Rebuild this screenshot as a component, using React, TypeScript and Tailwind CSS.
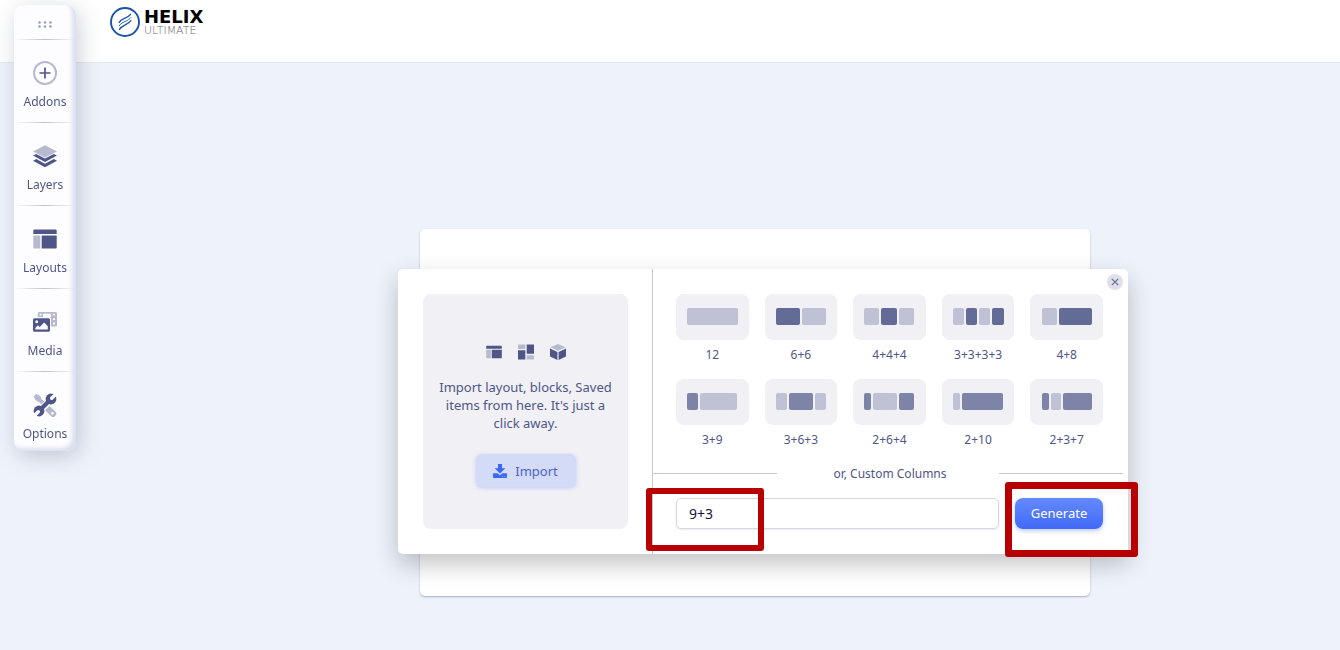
import { useState } from "react";
import type { ReactNode } from "react";

const DARK = "#4f5687";
const LIGHT = "#b7bacf";

function AddonsIcon() {
  return (
    <svg viewBox="0 0 24 24" className="size-6" fill="none" aria-hidden="true">
      <circle cx="12" cy="12" r="11" stroke={LIGHT} strokeWidth="2" />
      <path d="M12 6.5v11M6.5 12h11" stroke={DARK} strokeWidth="1.700" />
    </svg>
  );
}

function LayersIcon() {
  return (
    <svg viewBox="0 0 24 24" className="size-6" aria-hidden="true">
      <path d="M12 1.200 24 7.400 12 13.600 0 7.400z" fill={LIGHT} />
      <path d="M0 11.600 3.200 9.900 12 14.500l8.800-4.600 3.200 1.700L12 18z" fill={DARK} />
      <path d="M0 16.800 3.200 15.100 12 19.700l8.800-4.600 3.200 1.700L12 23.200z" fill={DARK} />
    </svg>
  );
}

function LayoutsIcon({ className }: { className: string }) {
  return (
    <svg viewBox="0 0 24 24" className={className} aria-hidden="true">
      <path d="M1.500 2.500h21a1.200 1.200 0 0 1 1.200 1.200V7H.3V3.700a1.200 1.200 0 0 1 1.200-1.200z" fill={DARK} />
      <path d="M.3 8.500h7v13H1.500a1.200 1.200 0 0 1-1.200-1.200z" fill={LIGHT} />
      <path d="M8.700 8.500h15v11.800a1.200 1.200 0 0 1-1.200 1.200H8.700z" fill={DARK} />
    </svg>
  );
}

function MediaIcon() {
  return (
    <svg viewBox="0 0 24 24" className="size-6" aria-hidden="true">
      <path
        fillRule="evenodd"
        fill={LIGHT}
        d="M6.200 2h16.300A1.500 1.500 0 0 1 24 3.500v11.600a1.500 1.500 0 0 1-1.500 1.500H18V8.500A1.500 1.500 0 0 0 16.500 7H4.700V3.500A1.500 1.500 0 0 1 6.200 2zM6.600 3.700v1.800h1.800V3.700zM10 3.700V7h8V3.700zM20 3.700v1.800h2V3.700zM20 8.200V10h2V8.200zM20 12.600v1.800h2v-1.800z"
      />
      <path
        fillRule="evenodd"
        fill={DARK}
        d="M1.500 8.200h14A1.500 1.500 0 0 1 17 9.700v10.600a1.500 1.500 0 0 1-1.500 1.500h-14A1.500 1.500 0 0 1 0 20.300V9.700a1.500 1.500 0 0 1 1.500-1.500zM3.700 10.300a1.500 1.500 0 1 0 0 3 1.500 1.500 0 0 0 0-3zM2.300 19.500h12.500v-3.300l-3.600-3.600-4.500 4.400-1.800-1.700-2.600 2.600z"
      />
    </svg>
  );
}

function OptionsIcon() {
  return (
    <svg viewBox="0 0 24 24" className="size-6" aria-hidden="true">
      <path d="M3 1.400 6.600 3 8.400 6.400l4.200 4.200-2.200 2.200L6.200 8.600 3 7 1.300 3.600z" fill={LIGHT} stroke={LIGHT} strokeLinejoin="round" />
      <path
        fillRule="evenodd"
        fill={LIGHT}
        d="m16.500 13 5.800 5.600a3.100 3.100 0 0 1-4.400 4.400L12 17.200zM19.400 18.900a1.400 1.400 0 1 0 0 2.800 1.400 1.400 0 0 0 0-2.800z"
      />
      <path d="M6.500 17.500 17.500 6.500" stroke="#fdfdff" strokeWidth="6" />
      <path d="M6 18 18 6" stroke={DARK} strokeWidth="4.200" />
      <circle cx="18" cy="6" r="5.400" fill={DARK} />
      <circle cx="6" cy="18" r="5.400" fill={DARK} />
      <path d="M18.700 5.300 24 0M5.300 18.700 0 24" stroke="#fdfdff" strokeWidth="3.400" strokeLinecap="round" />
    </svg>
  );
}

function BlocksIcon() {
  return (
    <svg viewBox="0 0 16 16" className="size-4" aria-hidden="true">
      <path d="M0 .500h7.300V5H0zM8.700 11.200H16v4.300H8.700z" fill={LIGHT} />
      <path d="M0 6.300h7.300v9.200H0zM8.700.500H16v9.200H8.700z" fill={DARK} />
    </svg>
  );
}

function CubeIcon() {
  return (
    <svg viewBox="0 0 16 16" className="size-4" aria-hidden="true">
      <path d="M8 0l7.500 3.300L8 6.800.500 3.300z" fill={LIGHT} />
      <path d="M0 4.600l7.400 3.300v8L.600 12.800A1 1 0 0 1 0 12zM16 4.600 8.600 7.900v8l6.800-3.100A1 1 0 0 0 16 12z" fill={DARK} />
    </svg>
  );
}

function DownloadIcon() {
  return (
    <svg viewBox="0 0 14 14" className="size-[14px]" fill="#3a68f5" aria-hidden="true">
      <path d="M5 0h4v4.300h3.300L7 9.500 1.700 4.300H5z" />
      <path
        fillRule="evenodd"
        d="M.7 9.300h3.800L7 11.300l2.500-2h3.800a.7.700 0 0 1 .7.700v3.300a.7.700 0 0 1-.7.700H.7a.7.700 0 0 1-.7-.7V10a.7.700 0 0 1 .7-.7zM9.300 12v.8h.8V12zM11.500 12v.8h.8V12z"
      />
    </svg>
  );
}

const tools: { label: string; icon: ReactNode }[] = [
  { label: "Addons", icon: <AddonsIcon /> },
  { label: "Layers", icon: <LayersIcon /> },
  { label: "Layouts", icon: <LayoutsIcon className="size-6" /> },
  { label: "Media", icon: <MediaIcon /> },
  { label: "Options", icon: <OptionsIcon /> },
];

const PALE = "bg-[#bfc1d5]";
const DEEP = "bg-[#636b97]";
const MID = "bg-[#7d84a8]";

type Bar = [width: number, tone: string];

const presets: { name: string; bars: Bar[] }[] = [
  { name: "12", bars: [[51, PALE]] },
  { name: "6+6", bars: [[24, DEEP], [24, PALE]] },
  { name: "4+4+4", bars: [[15, PALE], [16, DEEP], [15, PALE]] },
  { name: "3+3+3+3", bars: [[11, PALE], [11, DEEP], [11, PALE], [12, DEEP]] },
  { name: "4+8", bars: [[15, PALE], [33, DEEP]] },
  { name: "3+9", bars: [[11, MID], [37, PALE]] },
  { name: "3+6+3", bars: [[11, PALE], [24, MID], [11, PALE]] },
  { name: "2+6+4", bars: [[7, MID], [24, PALE], [15, MID]] },
  { name: "2+10", bars: [[7, PALE], [41, MID]] },
  { name: "2+3+7", bars: [[7, MID], [10, PALE], [29, MID]] },
];

function Separator() {
  return <div className="h-px bg-linear-to-r from-transparent via-[#bfc1d0] to-transparent" />;
}

function Sidebar() {
  return (
    <nav
      aria-label="Builder tools"
      className="fixed top-[5px] left-[14px] z-10 w-[62px] rounded-[10px] bg-[#fdfdff] shadow-[inset_-4px_-3px_4px_#d8dfef,3px_5px_22px_rgba(60,70,100,0.26)]"
    >
      <div className="flex h-[34px] items-center justify-center pt-1">
        <svg viewBox="0 0 14 7" className="h-[7px] w-[14px]" fill="#9a9fbb" aria-hidden="true">
          <circle cx="1.500" cy="1.500" r="1.300" />
          <circle cx="7" cy="1.500" r="1.300" />
          <circle cx="12.500" cy="1.500" r="1.300" />
          <circle cx="1.500" cy="5.500" r="1.300" />
          <circle cx="7" cy="5.500" r="1.300" />
          <circle cx="12.500" cy="5.500" r="1.300" />
        </svg>
      </div>
      {tools.map((tool) => (
        <div key={tool.label} className="group">
          <Separator />
          <button
            type="button"
            className="flex w-full flex-col items-center gap-2 pt-[21px] pb-[11px] text-xs/[18px] group-last:pb-2"
          >
            {tool.icon}
            {tool.label}
          </button>
        </div>
      ))}
    </nav>
  );
}

function Logo() {
  return (
    <a href="#" className="flex items-start gap-1">
      <svg viewBox="0 0 30 30" className="size-[30px]" fill="none" aria-hidden="true">
        <circle cx="15" cy="15" r="14" stroke="#1c52ae" strokeWidth="1.900" />
        <g stroke="#1c52ae" strokeWidth="1.400" strokeLinecap="round">
          <path d="M9.200 15.300c2.400-4 8-3.600 11.300-8" />
          <path d="M9.500 22.300c2.400-4.200 8-3.800 11.500-8.600" />
          <path d="M9.200 18.800c1.200-2.400 4-3.400 6.600-4.600 2-.9 3.800-2 5-3.600" strokeWidth=".9" />
        </g>
      </svg>
      <span className="flex flex-col">
        <span className="font-['DejaVu_Sans',sans-serif] text-lg/[20px] font-bold text-black">HELIX</span>
        <span className="font-['DejaVu_Sans',sans-serif] text-[11px]/[8px] font-extralight text-[#666666]">ULTIMATE</span>
      </span>
    </a>
  );
}

export default function App() {
  const [columns, setColumns] = useState("9+3");

  return (
    <div className="min-h-screen bg-[#eef3fb] font-['Noto_Sans','Open_Sans',sans-serif] text-[#4f5687]">
      <header className="flex h-[63px] items-start border-b border-[#e4e8ef] bg-white pt-[7px] pl-[110px]">
        <Logo />
      </header>
      <Sidebar />

      <main className="pt-[166px] pl-[170px]">
        <div className="mx-auto max-w-[670px] rounded-[5px] bg-white pt-10 pb-[42px] shadow-[0_1px_2px_rgba(79,86,135,0.45)]">
          <section
            aria-label="Add a row"
            className="relative -mr-[38px] -ml-[22px] flex rounded-[5px] bg-white shadow-[0_10px_25px_rgba(0,0,0,0.24)]"
          >
            <div className="flex w-[255px] shrink-0 border-r border-[#c5c7d6] py-[25px] pr-6 pl-[25px]">
              <div className="flex flex-1 flex-col items-center justify-center rounded-lg bg-[#f0f0f5] px-3 pt-2 text-center">
                <div className="flex items-center gap-4">
                  <LayoutsIcon className="size-4" />
                  <BlocksIcon />
                  <CubeIcon />
                </div>
                <p className="mt-[18px] text-[13px]/[18px]">
                  Import layout, blocks, Saved items from here. It's just a click away.
                </p>
                <button
                  type="button"
                  className="mt-[22px] flex h-[33px] w-[100px] items-center justify-center gap-2 rounded-md bg-[#d4dbf6] text-[13px]/[18px] text-[#4a64cc] shadow-[0_1px_4px_rgba(74,112,255,0.3)]"
                >
                  <DownloadIcon />
                  Import
                </button>
              </div>
            </div>

            <div className="flex-1 pt-[25px] pb-[25px]">
              <div className="grid grid-cols-5 gap-x-4 gap-y-4 pr-[25px] pl-[23px]">
                {presets.map((preset) => (
                  <button
                    key={preset.name}
                    type="button"
                    onClick={() => setColumns(preset.name)}
                    className="flex flex-col text-xs/[17px]"
                  >
                    <span className="flex h-[46px] w-full items-center justify-center gap-[2px] rounded-lg bg-[#f0f0f5] pb-px">
                      {preset.bars.map(([width, tone], index) => (
                        <span key={index} className={`h-[17px] rounded-xs ${tone}`} style={{ width }} />
                      ))}
                    </span>
                    <span className="mt-[6px] w-full text-center">{preset.name}</span>
                  </button>
                ))}
              </div>

              <div className="mt-4 mr-[5px] flex items-center">
                <div className="h-px flex-1 bg-[#c5c7d6]" />
                <label htmlFor="columns" className="w-[222px] pt-px pl-1 text-center text-xs/[17px]">
                  or, Custom Columns
                </label>
                <div className="h-px flex-1 bg-[#c5c7d6]" />
              </div>

              <div className="mt-4 flex gap-4 pr-[25px] pl-[23px]">
                <div className="relative flex flex-1">
                  <input
                    id="columns"
                    type="text"
                    value={columns}
                    onChange={(event) => setColumns(event.target.value)}
                    className="h-[31px] w-full min-w-0 rounded-[5px] border border-[#d5d8e4] bg-white px-3 text-sm text-[#14143c] shadow-[0_1px_2px_rgba(79,86,135,0.12)] outline-none"
                  />
                  <div className="pointer-events-none absolute -top-[10px] -left-[30px] h-[63px] w-[118px] rounded-[3px] border-[6px] border-[#b80000]" />
                </div>
                <div className="relative flex">
                  <button
                    type="button"
                    className="h-[31px] w-[88px] rounded-lg bg-linear-to-b from-[#648aff] to-[#4169f6] text-[13px] text-white shadow-[0_2px_4px_rgba(65,105,246,0.35)]"
                  >
                    Generate
                  </button>
                  <div className="pointer-events-none absolute -top-[16px] -left-[10px] h-[75px] w-[133px] rounded-[3px] border-[7px] border-[#b80000]" />
                </div>
              </div>
            </div>

            <button
              type="button"
              aria-label="Close"
              className="absolute top-[5px] right-[5px] flex size-4 items-center justify-center rounded-full bg-[#dfe0ea]"
            >
              <svg viewBox="0 0 8 8" className="size-2" aria-hidden="true">
                <path d="M.800.800l6.400 6.400M7.200.800.800 7.200" stroke="#656c97" strokeWidth="1.200" />
              </svg>
            </button>
          </section>
        </div>
      </main>
    </div>
  );
}
